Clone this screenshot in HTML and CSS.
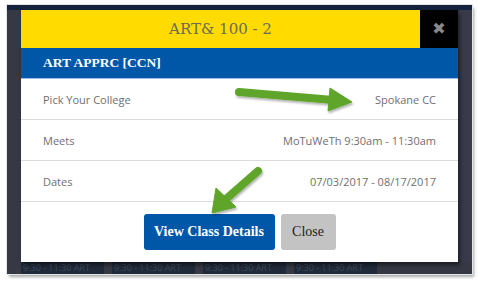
FILE: index.html
```html
<!DOCTYPE html>
<html>
<head>
<meta charset="utf-8">
<link rel="stylesheet" href="styles.css">
</head>
<body>
<div class="frame">
  <div class="topstrip"></div>
  <div class="stage">
    <div class="modal">
      <div class="head">
        <div class="title">ART&amp; 100 - 2</div>
        <div class="x">&#10006;</div>
      </div>
      <div class="course">ART APPRC [CCN]</div>
      <div class="row"><span class="lbl">Pick Your College</span><span class="val">Spokane CC</span></div>
      <div class="row"><span class="lbl">Meets</span><span class="val">MoTuWeTh 9:30am - 11:30am</span></div>
      <div class="row"><span class="lbl">Dates</span><span class="val">07/03/2017 - 08/17/2017</span></div>
      <div class="foot">
        <button class="btn primary">View Class Details</button>
        <button class="btn plain">Close</button>
      </div>
    </div>
    <div class="side"></div>
  </div>
  <div class="cells">
    <div class="cell">9:30 - 11:30 ART</div>
    <div class="cell">9:30 - 11:30 ART</div>
    <div class="cell">9:30 - 11:30 ART</div>
    <div class="cell">9:30 - 11:30 ART</div>
  </div>
</div>
<svg class="arrows" width="480" height="282" viewBox="0 0 480 282">
  <defs>
    <filter id="sh" x="-20%" y="-20%" width="140%" height="140%">
      <feDropShadow dx="1" dy="2" stdDeviation="1.2" flood-color="#000" flood-opacity="0.3"/>
    </filter>
  </defs>
  <g filter="url(#sh)" fill="#5fa52c" stroke="#5fa52c">
    <line x1="239" y1="92" x2="333" y2="100" stroke-width="8" stroke-linecap="round"/>
    <polygon points="330,88 352,102 328,111" stroke-width="1" stroke-linejoin="round"/>
    <line x1="258" y1="171" x2="226" y2="199" stroke-width="8" stroke-linecap="round"/>
    <polygon points="216,188 236,207 212,213" stroke-width="1" stroke-linejoin="round"/>
  </g>
</svg>
</body>
</html>
```

FILE: styles.css
```css
html, body { margin: 0; padding: 0; }
body {
  width: 480px; height: 282px; background: #fff; overflow: hidden;
  position: relative;
}
.frame {
  margin: 5px 0 0 7px;
  width: 465px; height: 269px;
  background: #363844;
  box-shadow: 0 0 0 1px #e4e4e4, 2px 3px 3px rgba(0,0,0,0.35);
  display: flex; flex-direction: column;
}
.topstrip { height: 7px; background: #14223d; }
.stage { display: flex; padding-left: 14px; }
.side { flex: 1; background: #3a3b4a; }
.modal {
  width: 437px; background: #fff;
  box-shadow: 2px 3px 4px rgba(0,0,0,0.5);
  position: relative; z-index: 1;
}
.head { display: flex; height: 38px; background: #ffdb00; }
.title {
  flex: 1; text-align: center; line-height: 38px;
  font-family: "DejaVu Serif", Georgia, serif; font-size: 15px; color: #6b6b5a;
}
.x {
  width: 38px; background: #000; color: #8a8a8a; text-align: center;
  line-height: 38px; font-family: "DejaVu Sans", sans-serif; font-size: 16px; font-weight: bold;
}
.course {
  line-height: 30px; background: #0057a8; color: #fff;
  padding-left: 22px; font-family: "Liberation Serif", serif; font-weight: bold; font-size: 13.5px;
  border-bottom: 1px solid #9cc0e4; box-sizing: border-box; height: 31px;
}
.row {
  display: flex; justify-content: space-between; align-items: center;
  height: 41px; box-sizing: border-box; border-bottom: 1px solid #dcdcdc;
  padding: 0 22px 0 22px;
  font-family: "Open Sans", sans-serif; font-size: 11px; color: #6f6f6f;
}
.row:first-of-type { height: 40px; }
.foot {
  height: 60px; display: flex; justify-content: center; align-items: center; gap: 6px;
  padding-bottom: 1px; box-sizing: border-box;
}
.btn {
  height: 36px; border: none; border-radius: 3px;
  font-family: "Liberation Serif", serif; font-size: 14px; padding: 0; margin: 0;
}
.primary { width: 131px; background: #0057a8; color: #fff; font-weight: bold; }
.plain { width: 55px; background: #c3c3c3; color: #222; }
.cells { display: flex; padding-left: 14px; gap: 8px; flex: 1; }
.cell {
  width: 81px; background: #202a3a; color: #3d4a5c;
  font-family: "Open Sans", sans-serif; font-size: 9px; line-height: 12px; padding-left: 2px;
}
.arrows { position: absolute; left: 0; top: 0; pointer-events: none; z-index: 5; }
```
